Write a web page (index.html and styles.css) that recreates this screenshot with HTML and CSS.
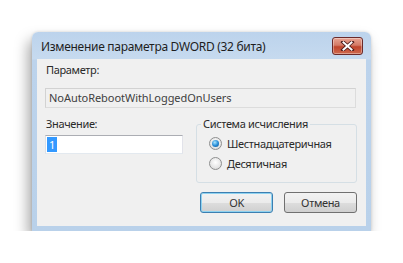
FILE: index.html
```html
<!DOCTYPE html>
<html>
<head>
<meta charset="utf-8">
<link rel="stylesheet" href="styles.css">
</head>
<body>
<div class="window">
  <div class="titlebar">
    <span class="title">Изменение параметра DWORD (32 бита)</span>
    <div class="close">
      <svg width="15" height="10" viewBox="0 0 15 10">
        <path d="M3 1 L12 9 M12 1 L3 9" stroke="#4a1a1a" stroke-width="3.6" fill="none" stroke-linecap="square"/>
        <path d="M3.5 1.5 L11.5 8.5 M11.5 1.5 L3.5 8.5" stroke="#ffffff" stroke-width="2" fill="none" stroke-linecap="square"/>
      </svg>
    </div>
  </div>
  <div class="client">
    <div class="label first">Параметр:</div>
    <div class="field readonly">NoAutoRebootWithLoggedOnUsers</div>
    <div class="row">
      <div class="valuecol">
        <div class="label">Значение:</div>
        <div class="field value"><span class="sel">1</span></div>
      </div>
      <fieldset class="group">
        <legend>Система исчисления</legend>
        <div class="radio"><span class="dot checked"></span>Шестнадцатеричная</div>
        <div class="radio"><span class="dot"></span>Десятичная</div>
      </fieldset>
    </div>
    <div class="buttons">
      <div class="btn default">OK</div>
      <div class="btn">Отмена</div>
    </div>
  </div>
</div>
</body>
</html>
```
FILE: styles.css
```css
html, body {
  margin: 0;
  padding: 0;
  background: #ffffff;
}
body {
  padding: 32px 0 0 32px;
  font-family: "Noto Sans", "Liberation Sans", sans-serif;
  font-size: 11px;
  letter-spacing: -0.35px;
  color: #1e1e1e;
}
.window {
  width: 339px;
  height: 199px;
  box-sizing: border-box;
  padding: 0 5px 5px 5px;
  background: linear-gradient(to bottom, #bcd3ec 0px, #c6daef 27px, #bcd3ec 28px, #b9d1ea 100%);
  border-radius: 6px 6px 0 0;
  box-shadow: -4px 8px 14px rgba(0, 0, 0, 0.34), 0 0 3px rgba(0, 0, 0, 0.15);
  display: flex;
  flex-direction: column;
}
.titlebar {
  height: 27px;
  display: flex;
  align-items: center;
  justify-content: space-between;
  flex: none;
}
.title {
  padding-left: 4px;
  padding-top: 2px;
  font-size: 12px;
  letter-spacing: -0.3px;
  color: #1e1e1e;
}
.close {
  width: 31px;
  height: 18px;
  box-sizing: border-box;
  margin-right: 3px;
  margin-top: 1px;
  border: 1px solid #6b2a2a;
  border-radius: 3px;
  background: linear-gradient(to bottom, #e8a493 0%, #d47a66 45%, #c0442c 55%, #cf6a4e 100%);
  display: flex;
  align-items: center;
  justify-content: center;
  box-shadow: inset 0 0 0 1px rgba(255,255,255,0.35);
}
.client {
  flex: 1;
  background: #f0f0f0;
  padding: 4px 0 0 8px;
  box-sizing: border-box;
  display: flex;
  flex-direction: column;
}
.label {
  height: 14px;
  line-height: 14px;
  color: #2a2a2a;
  margin-left: 1px;
}
.label.first {
  margin-bottom: 11px;
}
.field {
  box-sizing: border-box;
  border: 1px solid #c4c4c4;
  height: 20px;
  line-height: 18px;
  padding-left: 3px;
}
.readonly {
  width: 311px;
  background: #f0f0f0;
  border-color: #d2d2d2 #dcdcdc #dcdcdc #d2d2d2;
  color: #404040;
  letter-spacing: -0.05px;
}
.row {
  display: flex;
  align-items: flex-start;
  margin-top: 9px;
}
.valuecol {
  display: flex;
  flex-direction: column;
}
.value {
  width: 138px;
  height: 19px;
  margin-top: 4px;
  background: #ffffff;
  border-color: #abadb3 #e2e3ea #e3e9ef #dbdfe6;
  padding-left: 1px;
  line-height: 17px;
}
.sel {
  display: inline-block;
  background: #3399ff;
  color: #ffffff;
  padding: 0 2px;
  line-height: 15px;
  margin-top: 1px;
}
.group {
  margin: 0 0 0 13px;
  padding: 2px 0 9px 11px;
  width: 161px;
  box-sizing: border-box;
  border: 1px solid #d5dfe5;
  border-radius: 3px;
  min-width: 0;
}
.group legend {
  padding: 0 2px;
  margin-left: -7px;
  color: #2a2a2a;
  line-height: 14px;
}
.radio {
  display: flex;
  align-items: center;
  height: 20px;
  color: #2a2a2a;
}
.dot {
  width: 11px;
  height: 11px;
  border: 1px solid #8e8f8f;
  border-radius: 50%;
  background: radial-gradient(circle at 50% 40%, #ffffff 0%, #e6e6e6 60%, #d0d0d0 100%);
  margin-right: 5px;
  margin-left: 1px;
  position: relative;
  flex: none;
}
.dot.checked::after {
  content: "";
  position: absolute;
  left: 2px;
  top: 2px;
  width: 7px;
  height: 7px;
  border-radius: 50%;
  background: radial-gradient(circle at 40% 35%, #a9e6ff 0%, #2b8fd8 50%, #0d4f8a 100%);
}
.buttons {
  display: flex;
  gap: 11px;
  margin-top: 9px;
  margin-left: 155px;
}
.btn {
  width: 73px;
  height: 21px;
  box-sizing: border-box;
  border: 1px solid #707070;
  border-radius: 3px;
  background: linear-gradient(to bottom, #f2f2f2 0%, #ebebeb 50%, #dddddd 51%, #cfcfcf 100%);
  text-align: center;
  line-height: 19px;
  color: #333;
}
.btn.default {
  border-color: #3c7fb1;
  box-shadow: inset 0 0 0 1px #8ed2f0;
}
```
